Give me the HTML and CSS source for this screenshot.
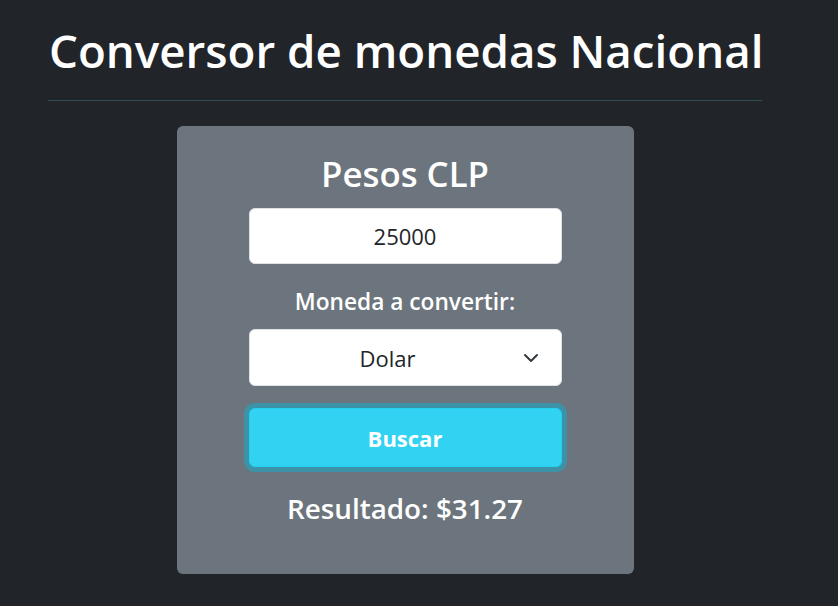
FILE: index.html
```html
<!DOCTYPE html>
<html lang="es">
<head>
<meta charset="utf-8">
<title>Conversor de monedas Nacional</title>
<link rel="stylesheet" href="styles.css">
</head>
<body>
<div class="wrap">
  <h1 class="title">Conversor de monedas Nacional</h1>
  <hr class="rule">
  <div class="card">
    <h2 class="card-title">Pesos CLP</h2>
    <input class="field" type="text" value="25000">
    <label class="label">Moneda a convertir:</label>
    <div class="select">
      <span>Dolar</span>
      <svg class="chev" width="16" height="16" viewBox="0 0 16 16"><path d="M2 5l6 6 6-6" fill="none" stroke="#343a40" stroke-width="2" stroke-linecap="round" stroke-linejoin="round"/></svg>
    </div>
    <button class="btn">Buscar</button>
    <p class="result">Resultado: $31.27</p>
  </div>
</div>
</body>
</html>
```
FILE: styles.css
```css
html, body {
  margin: 0;
  padding: 0;
  background: #212529;
  color: #fff;
  font-family: "Open Sans", "Noto Sans", sans-serif;
}
.wrap {
  width: 714px;
  margin-left: 48px;
  padding-top: 22px;
}
.title {
  margin: 0 0 0 1px;
  font-size: 45.7px;
  font-weight: 600;
  line-height: 56px;
  white-space: nowrap;
}
.rule {
  margin: 22px 0 0;
  border: 0;
  height: 1px;
  background: #2e4f56;
}
.card {
  width: 457px;
  height: 448px;
  box-sizing: border-box;
  margin: 25px auto 0;
  background: #6c757d;
  border-radius: 6px;
  display: flex;
  flex-direction: column;
  align-items: center;
  padding-top: 26px;
}
.card-title {
  margin: 0;
  font-size: 34.8px;
  font-weight: 600;
  line-height: 44px;
  white-space: nowrap;
}
.field {
  margin-top: 12px;
  width: 313px;
  height: 56px;
  box-sizing: border-box;
  border: 1px solid #dee2e6;
  border-radius: 6px;
  background: #fff;
  text-align: center;
  font-family: inherit;
  font-size: 22px;
  color: #212529;
  outline: none;
}
.label {
  margin-top: 23px;
  font-size: 22.7px;
  font-weight: 600;
  line-height: 30px;
  white-space: nowrap;
}
.select {
  margin-top: 12px;
  width: 313px;
  height: 57px;
  box-sizing: border-box;
  padding-right: 35px;
  border: 1px solid #dee2e6;
  border-radius: 6px;
  background: #fff;
  color: #212529;
  font-size: 22px;
  display: flex;
  align-items: center;
  justify-content: center;
  position: relative;
}
.chev {
  position: absolute;
  right: 22px;
  top: 20px;
}
.btn {
  margin-top: 22px;
  width: 313px;
  height: 59px;
  box-sizing: border-box;
  border: 1px solid #25cff2;
  border-radius: 6px;
  background: #31d2f2;
  box-shadow: 0 0 0 5px #3c93a8;
  color: #fff;
  font-family: inherit;
  font-size: 22px;
  font-weight: 700;
}
.result {
  margin: 23px 0 0;
  font-size: 27.8px;
  font-weight: 600;
  line-height: 36px;
  white-space: nowrap;
}
```
